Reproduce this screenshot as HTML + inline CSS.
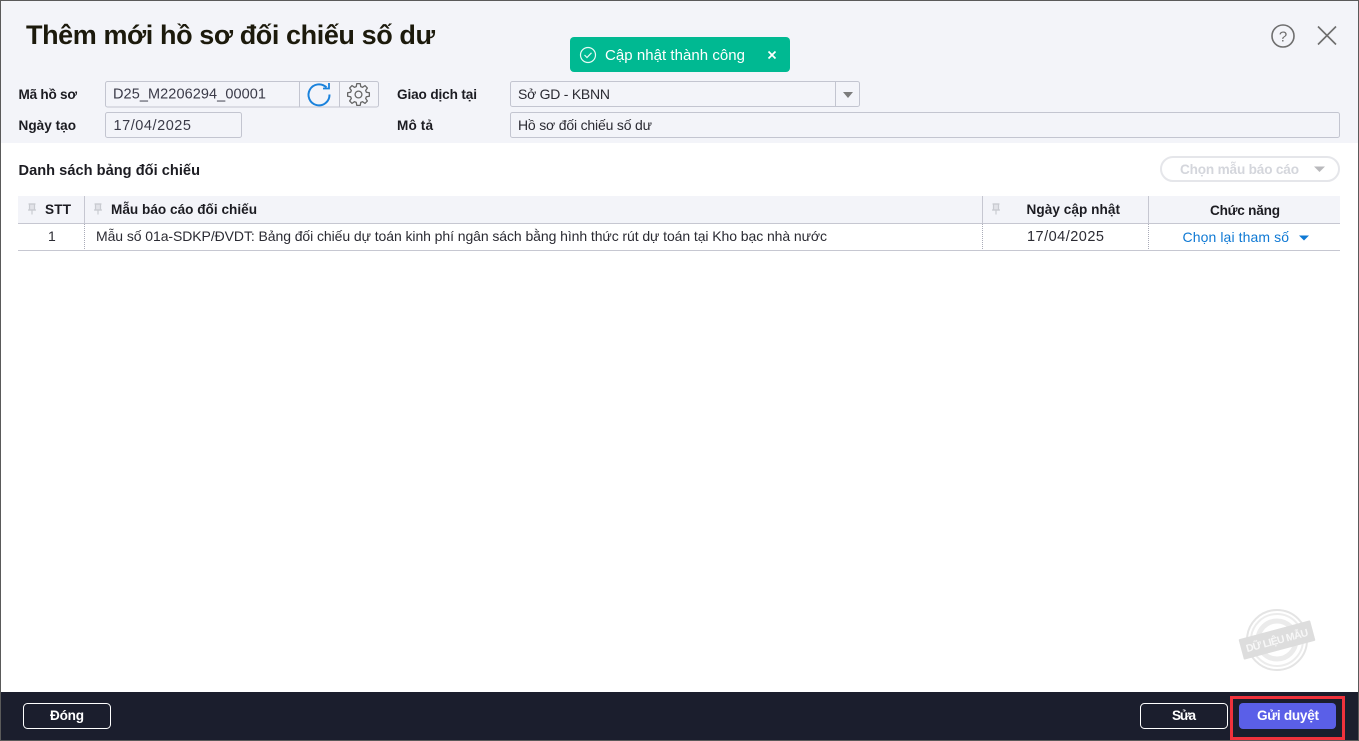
<!DOCTYPE html>
<html lang="vi">
<head>
<meta charset="utf-8">
<title>Thêm mới hồ sơ đối chiếu số dư</title>
<style>
html,body{margin:0;padding:0;width:1359px;height:741px;overflow:hidden;background:#fff}
svg{display:block}
text{font-family:"Liberation Sans","DejaVu Sans",sans-serif;font-size:14px;fill:#2b2b33;white-space:pre}
.b{font-weight:700;fill:#1c1c22;font-size:13.6px}
</style>
</head>
<body>
<svg width="1359" height="741" viewBox="0 0 1359 741" xmlns="http://www.w3.org/2000/svg">
<defs>
<g id="pin" fill="none" stroke="#c9cbd1" stroke-width="1.2">
<rect x="-2.5" y="-4.5" width="5" height="6" fill="#e2e3e8"/>
<path d="M-4 1.5H4M-3.5 -4.5H3.5M0 2V6"/>
</g>
</defs>
<rect width="1359" height="741" fill="#fff"/>
<rect width="1359" height="143" fill="#f3f4f9"/>

<!-- title -->
<text x="26" y="44" class="b" style="font-size:27px;fill:#1c1a0c" textLength="409" lengthAdjust="spacing">Thêm mới hồ sơ đối chiếu số dư</text>

<!-- help / close -->
<circle cx="1283" cy="36" r="11" fill="none" stroke="#6e6e6e" stroke-width="1.6"/>
<text x="1283" y="41.5" text-anchor="middle" style="font-size:15px;fill:#6e6e6e">?</text>
<path d="M1318 26.5L1336 44.5M1336 26.5L1318 44.5" stroke="#6e6e6e" stroke-width="1.6" fill="none"/>

<!-- form labels -->
<text x="18.5" y="99" class="b" textLength="58.5" lengthAdjust="spacing">Mã hồ sơ</text>
<text x="18.5" y="130" class="b" textLength="57.5" lengthAdjust="spacing">Ngày tạo</text>
<text x="397" y="99" class="b" textLength="80" lengthAdjust="spacing">Giao dịch tại</text>
<text x="397" y="130" class="b" textLength="36" lengthAdjust="spacing">Mô tả</text>

<!-- ma ho so field -->
<rect x="105.5" y="81.5" width="273" height="25.5" rx="2" fill="#f3f4f9" stroke="#c3c5d0"/>
<path d="M299.5 82V107M339.5 82V107" stroke="#c3c5d0"/>
<text x="113" y="98.5" textLength="153" lengthAdjust="spacing" style="fill:#3a3a48;font-size:14.5px">D25_M2206294_00001</text>
<path d="M326.5 87.5A10.5 10.5 0 1 0 329.5 94.5" fill="none" stroke="#1a82dc" stroke-width="2"/>
<path d="M329 83V88.5H323" fill="none" stroke="#1a82dc" stroke-width="1.8"/>
<!-- gear -->
<g transform="translate(358.5 94.5)" fill="none" stroke="#666" stroke-width="1.3" stroke-linejoin="round">
<circle r="3.4"/>
<path d="M-2.26 -7.88L-1.72 -10.86H1.72L2.26 -7.88L3.98 -7.17L6.47 -8.9L8.9 -6.47L7.17 -3.98L7.88 -2.26L10.86 -1.72V1.72L7.88 2.26L7.17 3.98L8.9 6.47L6.47 8.9L3.98 7.17L2.26 7.88L1.72 10.86H-1.72L-2.26 7.88L-3.98 7.17L-6.47 8.9L-8.9 6.47L-7.17 3.98L-7.88 2.26L-10.86 1.72V-1.72L-7.88 -2.26L-7.17 -3.98L-8.9 -6.47L-6.47 -8.9L-3.98 -7.17Z"/>
</g>

<!-- date -->
<rect x="105.5" y="112.5" width="136" height="25" rx="2" fill="#f3f4f9" stroke="#c3c5d0"/>
<text x="113.5" y="130" textLength="77.5" lengthAdjust="spacing" style="fill:#3a3a48;font-size:14.5px">17/04/2025</text>

<!-- select -->
<rect x="510.5" y="81.5" width="349" height="25" rx="2" fill="#f3f4f9" stroke="#c3c5d0"/>
<path d="M835.5 82V106" stroke="#c3c5d0"/>
<path d="M843 92H853L848 98Z" fill="#7c7c7c"/>
<text x="518" y="99" textLength="92" lengthAdjust="spacing">Sở GD - KBNN</text>

<!-- desc -->
<rect x="510.5" y="112.5" width="829" height="25" rx="2" fill="#f3f4f9" stroke="#c3c5d0"/>
<text x="518" y="130" textLength="134" lengthAdjust="spacing">Hồ sơ đối chiếu số dư</text>

<!-- toast -->
<rect x="570" y="37" width="220" height="35" rx="4" fill="#00b992"/>
<circle cx="588" cy="55" r="7.5" fill="none" stroke="#e8fbf5" stroke-width="1.2"/>
<path d="M584.5 55L587 57.5L591.5 52.8" fill="none" stroke="#e8fbf5" stroke-width="1.2"/>
<text x="605" y="60" textLength="140" lengthAdjust="spacing" style="font-size:15px;fill:#fff">Cập nhật thành công</text>
<path d="M768.5 51.5L775.5 58.5M775.5 51.5L768.5 58.5" stroke="#fff" stroke-width="1.7" fill="none"/>

<!-- section -->
<text x="18.5" y="175" class="b" textLength="181.5" lengthAdjust="spacing" style="font-size:14.6px">Danh sách bảng đối chiếu</text>
<rect x="1161" y="157" width="178" height="24" rx="12" fill="#fff" stroke="#e5e6ea" stroke-width="2"/>
<text x="1180" y="174" class="b" textLength="119" lengthAdjust="spacing" style="fill:#d4d6dc">Chọn mẫu báo cáo</text>
<path d="M1314 166.5H1325L1319.5 172Z" fill="#b9b9bc"/>

<!-- table -->
<rect x="18" y="196" width="1322" height="27" fill="#f3f4f9"/>
<path d="M18 223.5H1340M18 250.5H1340" stroke="#c6c7d1"/>
<path d="M84.5 196V223M982.5 196V223M1148.5 196V223" stroke="#c6c7d1"/>
<path d="M84.5 224V250M982.5 224V250M1148.5 224V250" stroke="#a9abb8" stroke-dasharray="1 1"/>
<use href="#pin" x="32" y="208.5"/>
<use href="#pin" x="98" y="208.5"/>
<use href="#pin" x="996" y="208.5"/>
<text x="45" y="214" class="b" textLength="26" lengthAdjust="spacing">STT</text>
<text x="111" y="214" class="b" textLength="146" lengthAdjust="spacing">Mẫu báo cáo đối chiếu</text>
<text x="1026.5" y="214" class="b" textLength="93.5" lengthAdjust="spacing">Ngày cập nhật</text>
<text x="1210" y="215" class="b" textLength="70" lengthAdjust="spacing">Chức năng</text>
<text x="48" y="241">1</text>
<text x="96" y="241" textLength="731" lengthAdjust="spacing">Mẫu số 01a-SDKP/ĐVDT: Bảng đối chiếu dự toán kinh phí ngân sách bằng hình thức rút dự toán tại Kho bạc nhà nước</text>
<text x="1027" y="241" textLength="77" lengthAdjust="spacing" style="font-size:14.5px">17/04/2025</text>
<text x="1182.5" y="242" textLength="106.5" lengthAdjust="spacing" style="fill:#0f79d4">Chọn lại tham số</text>
<path d="M1299 235.5H1309L1304 240.5Z" fill="#0f79d4"/>

<!-- watermark stamp -->
<g transform="translate(1277 640)">
<circle r="30" fill="none" stroke="#e4e4e4" stroke-width="2"/>
<circle r="26" fill="none" stroke="#ececec" stroke-width="2"/>
<circle r="19" fill="none" stroke="#ebebeb" stroke-width="5"/>
<g transform="rotate(-15)">
<rect x="-37" y="-10.5" width="74" height="21" rx="1" fill="#dddddd"/>
<text x="-32" y="4" textLength="64" lengthAdjust="spacing" style="font-size:10.5px;font-weight:700;fill:#f7f7f7">DỮ LIỆU MẪU</text>
</g>
</g>

<!-- footer -->
<rect x="0" y="692" width="1359" height="49" fill="#1b1e2d"/>
<rect x="23.5" y="703.5" width="87" height="25" rx="4" fill="none" stroke="#fff"/>
<text x="50" y="720" class="b" textLength="34" lengthAdjust="spacing" style="fill:#fff">Đóng</text>
<rect x="1140.5" y="703.5" width="87" height="25" rx="4" fill="none" stroke="#fff"/>
<text x="1172" y="720" class="b" textLength="24" lengthAdjust="spacing" style="fill:#fff">Sửa</text>
<rect x="1239" y="703" width="97" height="26" rx="4" fill="#5a5fe8"/>
<text x="1257" y="720" class="b" textLength="62" lengthAdjust="spacing" style="fill:#fff">Gửi duyệt</text>
<rect x="1231.5" y="697.5" width="112" height="41" fill="none" stroke="#f0323c" stroke-width="3"/>

<!-- window border -->
<rect x="0.5" y="0.5" width="1358" height="740" fill="none" stroke="#5a5a5a"/>
</svg>
</body>
</html>
